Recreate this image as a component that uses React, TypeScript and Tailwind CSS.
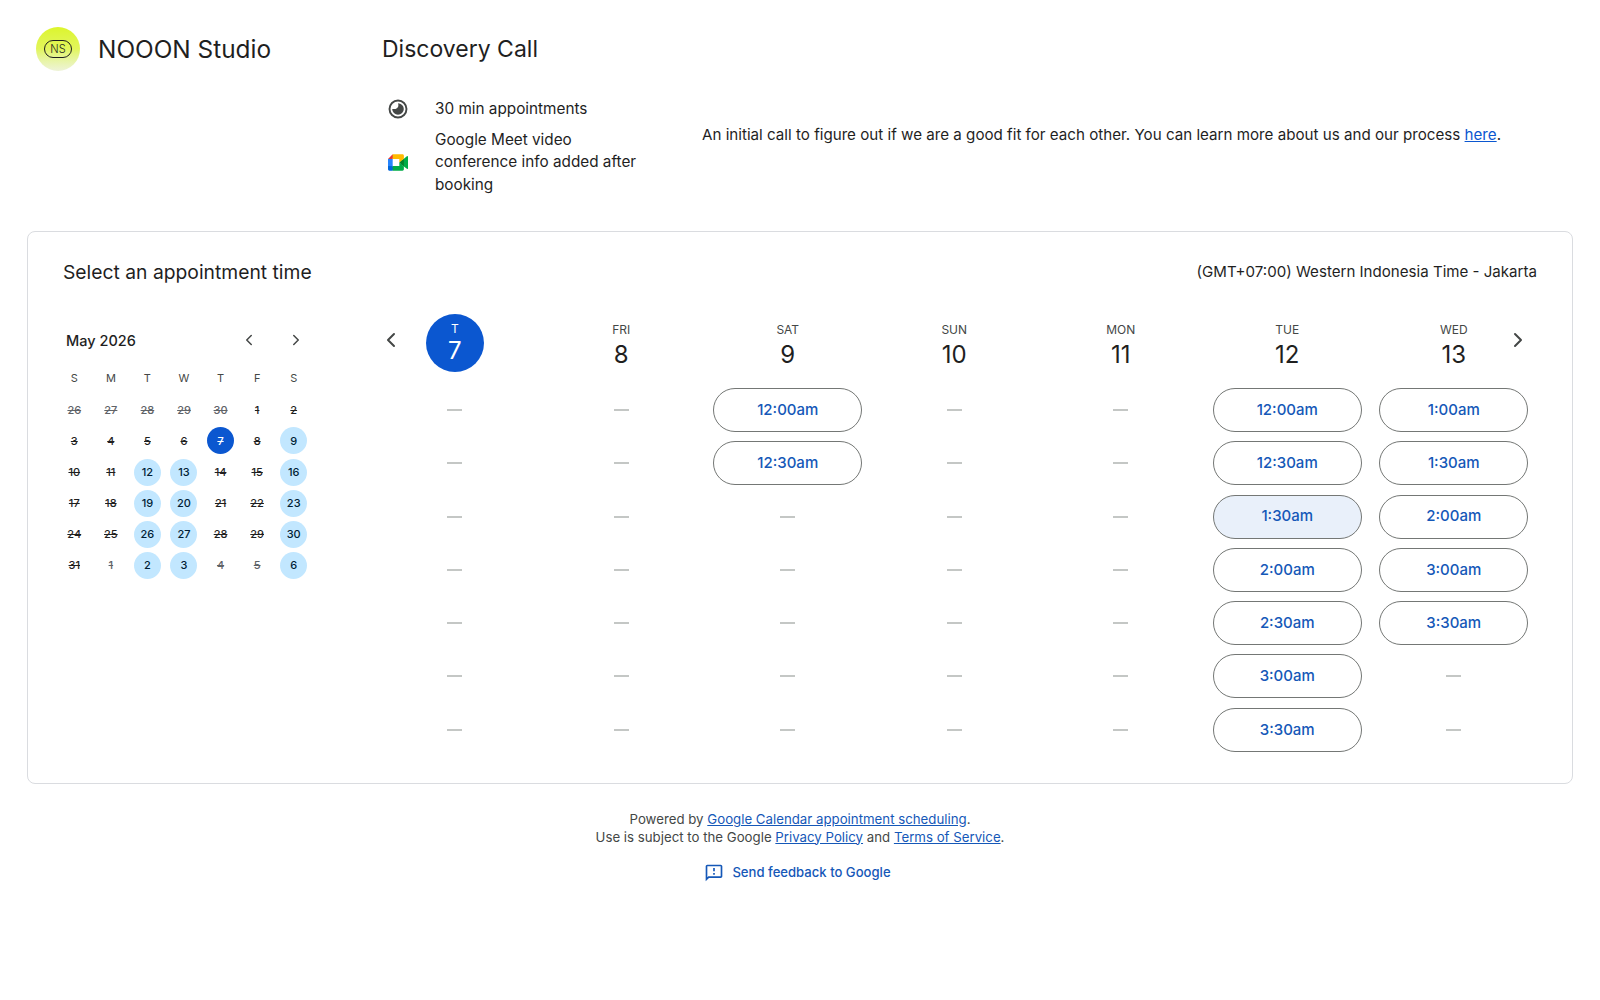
import { ChevronLeft, ChevronRight } from 'lucide-react';

const font = 'font-["Inter","Noto_Sans",sans-serif]';

type Cell = { d: number; kind: 'faded' | 'struck' | 'open' | 'selected' };

const f = (d: number): Cell => ({ d, kind: 'faded' });
const s = (d: number): Cell => ({ d, kind: 'struck' });
const o = (d: number): Cell => ({ d, kind: 'open' });

const monthCells: Cell[] = [
  f(26), f(27), f(28), f(29), f(30), s(1), s(2),
  s(3), s(4), s(5), s(6), { d: 7, kind: 'selected' }, s(8), o(9),
  s(10), s(11), o(12), o(13), s(14), s(15), o(16),
  s(17), s(18), o(19), o(20), s(21), s(22), o(23),
  s(24), s(25), o(26), o(27), s(28), s(29), o(30),
  s(31), f(1), o(2), o(3), f(4), f(5), o(6),
];

const weekDays: { label: string; num: number; slots: string[]; today?: boolean }[] = [
  { label: 'T', num: 7, slots: [], today: true },
  { label: 'FRI', num: 8, slots: [] },
  { label: 'SAT', num: 9, slots: ['12:00am', '12:30am'] },
  { label: 'SUN', num: 10, slots: [] },
  { label: 'MON', num: 11, slots: [] },
  { label: 'TUE', num: 12, slots: ['12:00am', '12:30am', '1:30am', '2:00am', '2:30am', '3:00am', '3:30am'] },
  { label: 'WED', num: 13, slots: ['1:00am', '1:30am', '2:00am', '3:00am', '3:30am'] },
];

const ROWS = [0, 1, 2, 3, 4, 5, 6];

function MeetIcon() {
  return (
    <svg width="20" height="17" viewBox="0 0 87.5 72">
      <path fill="#00832d" d="M49.5 36l8.53 9.75 11.47 7.33 2-17.02-2-16.64-11.69 6.44z" />
      <path fill="#0066da" d="M0 51.5V66c0 3.315 2.685 6 6 6h14.5l3-10.96-3-9.54-9.95-3z" />
      <path fill="#e53935" d="M20.5 0L0 20.5l10.55 3 9.95-3 2.95-9.41z" />
      <path fill="#2684fc" d="M20.5 20.5H0v31h20.5z" />
      <path fill="#00ac47" d="M82.6 8.68L69.5 19.42v33.66l13.16 10.79c1.97 1.54 4.85.135 4.85-2.37V11c0-2.535-2.945-3.925-4.91-2.32zM49.5 36v15.5h-29V72h43c3.315 0 6-2.685 6-6V53.08z" />
      <path fill="#ffba00" d="M63.5 0h-43v20.5h29V36l20-16.57V6c0-3.315-2.685-6-6-6z" />
    </svg>
  );
}

function ClockIcon() {
  return (
    <svg width="20" height="20" viewBox="0 0 20 20">
      <circle cx="10" cy="10" r="8.5" fill="none" stroke="#444746" strokeWidth="1.9" />
      <path fill="#444746" d="M10 4.2a5.8 5.8 0 1 1-5.8 5.8H7.6a4.6 4.6 0 0 0 2.4-5.8z" />
    </svg>
  );
}

function Logo() {
  return (
    <div className="w-11 h-11 rounded-full bg-gradient-to-b from-[#dcf52a] via-[#e2f55a] to-[#eef3d8] flex items-center justify-center">
      <div className="w-[28px] h-[18px] rounded-[9px] border border-[#1f1f1f] flex items-center justify-center text-[11px] font-light leading-none text-[#1f1f1f]">
        NS
      </div>
    </div>
  );
}

function MiniCalendar() {
  return (
    <div className="w-[256px]">
      <div className="flex items-center h-8 pl-[10px]">
        <span className="text-[14.5px] font-medium text-[#1f1f1f] flex-1 pt-[1px]">May 2026</span>
        <ChevronLeft className="w-[18px] h-[18px] text-[#444746] mr-[29px]" />
        <ChevronRight className="w-[18px] h-[18px] text-[#444746] mr-[7px]" />
      </div>
      <div className="grid grid-cols-7 mt-[7px] auto-rows-[31.2px] text-[11px] font-medium">
        {['S', 'M', 'T', 'W', 'T', 'F', 'S'].map((h, i) => (
          <div key={i} className="flex items-center justify-center text-[#444746] font-normal">{h}</div>
        ))}
        {monthCells.map((c, i) => (
          <div key={i} className="flex items-center justify-center">
            {c.kind === 'faded' && <span className="line-through text-[#5f6368]">{c.d}</span>}
            {c.kind === 'struck' && <span className="line-through text-[#1f1f1f]">{c.d}</span>}
            {c.kind === 'open' && (
              <span className="w-[27px] h-[27px] rounded-full bg-[#c2e7ff] flex items-center justify-center text-[#001d35]">{c.d}</span>
            )}
            {c.kind === 'selected' && (
              <span className="w-[27px] h-[27px] rounded-full bg-[#0b57d0] flex items-center justify-center text-white line-through">{c.d}</span>
            )}
          </div>
        ))}
      </div>
    </div>
  );
}

function WeekGrid() {
  return (
    <div className="flex-1 relative">
      <ChevronLeft className="absolute left-[-4px] top-[16px] w-6 h-6 text-[#444746]" />
      <ChevronRight className="absolute right-[7px] top-[16px] w-6 h-6 text-[#444746]" />
      <div className="grid grid-cols-7 w-[1165.5px] -ml-[11.5px]">
        {weekDays.map((day) => (
          <div key={day.num} className="flex flex-col items-center">
            <div className="h-[68px] flex items-center justify-center">
              {day.today ? (
                <div className="w-[58px] h-[58px] mb-[6px] rounded-full bg-[#0b57d0] text-white flex flex-col items-center justify-center">
                  <span className="text-[12px] leading-[14px] mt-[1px]">{day.label}</span>
                  <span className="text-[24px] leading-[28px] mt-[1px]">{day.num}</span>
                </div>
              ) : (
                <div className="flex flex-col items-center text-[#1f1f1f]">
                  <span className="text-[12px] leading-[16px] text-[#444746]">{day.label}</span>
                  <span className="text-[24px] leading-[32px] mt-[1px]">{day.num}</span>
                </div>
              )}
            </div>
            <div className="flex flex-col gap-[9.3px] mt-[8px]">
              {ROWS.map((r) => {
                const slot = day.slots[r];
                if (!slot) {
                  return (
                    <div key={r} className="h-[44px] flex items-center justify-center">
                      <div className="w-[15px] h-[2px] bg-[#c4c7c5]" />
                    </div>
                  );
                }
                const active = day.label === 'TUE' && slot === '1:30am';
                return (
                  <button
                    key={r}
                    className={`w-[149px] h-[44px] rounded-full border border-[#747775] text-[15px] font-medium text-[#1558b8] ${active ? 'bg-[#e9f0fa]' : 'bg-white'}`}
                  >
                    {slot}
                  </button>
                );
              })}
            </div>
          </div>
        ))}
      </div>
    </div>
  );
}

export default function App() {
  return (
    <div className={`${font} min-h-screen bg-white text-[#1f1f1f]`}>
      <header className="flex items-start h-[231px] pt-[27px] pl-[36px]">
        <div className="w-[346px] flex items-center gap-[18px] shrink-0">
          <Logo />
          <h1 className="text-[24.4px] leading-[44px]">NOOON Studio</h1>
        </div>
        <div className="w-[320px] shrink-0">
          <h2 className="text-[23px] leading-[44px]">Discovery Call</h2>
          <div className="mt-[27px] text-[15.3px] leading-[22.4px]">
            <div className="flex items-center pl-[5px]">
              <span className="w-[48px] shrink-0 pl-[1px]"><ClockIcon /></span>
              <span>30 min appointments</span>
            </div>
            <div className="flex items-center pl-[5px] mt-[8.6px]">
              <span className="w-[48px] shrink-0 pl-[1px]"><MeetIcon /></span>
              <span className="w-[220px]">Google Meet video conference info added after booking</span>
            </div>
          </div>
        </div>
        <p className="pt-[96.5px] text-[15.17px] leading-[22px]">
          An initial call to figure out if we are a good fit for each other. You can learn more about us and our process{' '}
          <a href="#" className="text-[#0b57d0] underline">here</a>.
        </p>
      </header>

      <section className="mx-[27px] h-[553px] border border-[#dadce0] rounded-lg px-[35px] pt-[24px]">
        <div className="flex items-center justify-between h-8">
          <h3 className="text-[19.3px]">Select an appointment time</h3>
          <span className="text-[15.1px]">(GMT+07:00) Western Indonesia Time - Jakarta</span>
        </div>
        <div className="flex mt-[24px]">
          <div className="w-[327px] shrink-0 pt-[12px] -ml-[7px]">
            <MiniCalendar />
          </div>
          <WeekGrid />
        </div>
      </section>

      <footer className="flex flex-col items-center mt-[27px] text-[13.25px] leading-[17.5px] text-[#444746]">
        <p>
          Powered by <a href="#" className="text-[#1558b8] underline">Google Calendar appointment scheduling</a>.
        </p>
        <p>
          Use is subject to the Google <a href="#" className="text-[#1558b8] underline">Privacy Policy</a> and{' '}
          <a href="#" className="text-[#1558b8] underline">Terms of Service</a>.
        </p>
        <a href="#" className="flex items-center gap-[8px] mt-[17px] mr-[5px] text-[#1558b8] font-medium text-[13.1px]">
          <svg width="20" height="20" viewBox="0 0 24 24" fill="#1558b8">
            <path d="M20 2H4c-1.1 0-1.99.9-1.99 2L2 22l4-4h14c1.1 0 2-.9 2-2V4c0-1.1-.9-2-2-2zm0 14H5.17L4 17.17V4h16v12zM11 12h2v2h-2zm0-6h2v4h-2z" />
          </svg>
          Send feedback to Google
        </a>
      </footer>
    </div>
  );
}
